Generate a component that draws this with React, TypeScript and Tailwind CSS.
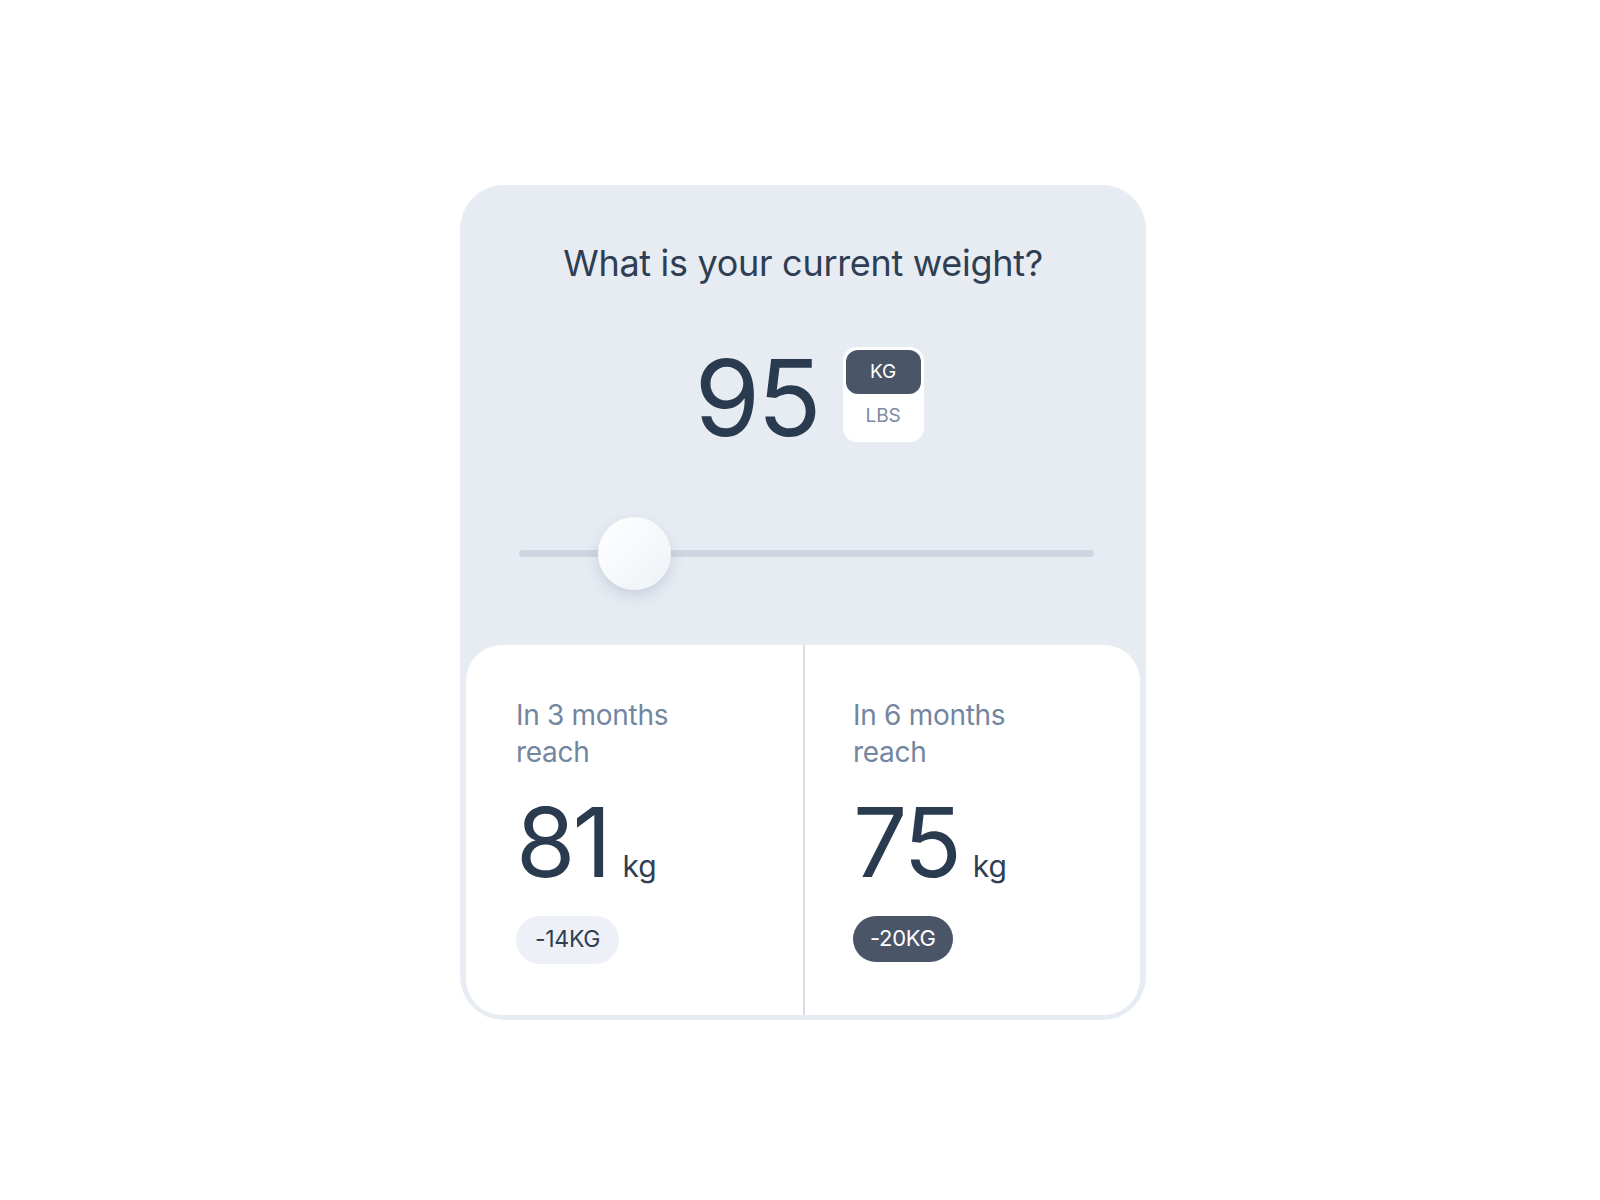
import React from "react";

export default function App() {
  return (
    <div
      className="flex h-[1200px] w-full items-center justify-center bg-white"
      style={{ fontFamily: "Inter, 'Noto Sans', sans-serif" }}
    >
      <div className="ml-[6px] mt-[4px] flex w-[686px] flex-col rounded-[44px] bg-[#e7ecf3] px-[6px] pb-[5px]">
        {/* Top section */}
        <div className="flex h-[460px] flex-col">
          <h1 className="mt-[60px] text-center text-[36px] leading-[36px] font-normal tracking-[-0.3px] text-[#2f3e52]">
            What is your current weight?
          </h1>
          <div className="mt-[64px] ml-[12px] flex items-center justify-center gap-[24px]">
            <div className="text-[106px] leading-[106px] font-normal tracking-[-3px] text-[#2a3b50]">
              95
            </div>
            <div className="mb-[6px] flex w-[81px] flex-col rounded-[14px] bg-white p-[3px]">
              <div className="flex h-[44px] items-center justify-center rounded-[12px] bg-[#4a5568] text-[19px] text-white">
                KG
              </div>
              <div className="flex h-[45px] items-center justify-center text-[19px] text-[#7b8aa3]">
                LBS
              </div>
            </div>
          </div>
          <div className="relative mt-[66px] ml-[53px] mr-[46px] h-[73px]">
            <div className="absolute top-[33px] left-0 right-0 h-[7px] rounded-full bg-[#cdd6e0]" />
            <div className="absolute top-0 left-[79px] h-[73px] w-[73px] rounded-full bg-gradient-to-br from-white to-[#eef2f7] shadow-[0_6px_14px_rgba(100,116,139,0.22)]" />
          </div>
        </div>
        {/* Bottom panel */}
        <div className="grid h-[370px] grid-cols-2 rounded-[36px] bg-white">
          <Column label1="In 3 months" label2="reach" value="81" badge="-14KG" dark={false} />
          <div className="relative">
            <div className="absolute top-0 bottom-0 left-0 w-[2px] bg-[#d6dee8]" />
            <Column label1="In 6 months" label2="reach" value="75" badge="-20KG" dark />
          </div>
        </div>
      </div>
    </div>
  );
}

function Column({
  label1,
  label2,
  value,
  badge,
  dark,
}: {
  label1: string;
  label2: string;
  value: string;
  badge: string;
  dark: boolean;
}) {
  return (
    <div className="flex flex-col items-start pt-[52px] pl-[50px]">
      <div className="text-[28px] leading-[37px] tracking-[-0.3px] text-[#7386a0]">
        {label1}
        <br />
        {label2}
      </div>
      <div className="mt-[23px] flex items-baseline">
        <span className="text-[96px] leading-[96px] tracking-[-3px] text-[#2a3b50]">{value}</span>
        <span className="ml-[14px] text-[30px] leading-[30px] text-[#2f3e52]">kg</span>
      </div>
      <div
        className={
          dark
            ? "mt-[26px] flex h-[46px] items-center rounded-full bg-[#4a5568] px-[17px] text-[22px] tracking-[-0.3px] text-white"
            : "mt-[26px] flex h-[48px] items-center rounded-full bg-[#edf1f7] px-[19px] text-[23px] tracking-[-0.3px] text-[#2f3e52]"
        }
      >
        {badge}
      </div>
    </div>
  );
}
